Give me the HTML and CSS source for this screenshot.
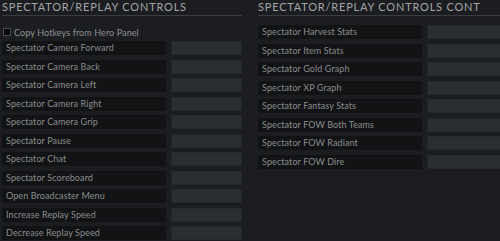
FILE: index.html
```html
<!doctype HTML>
<html>

<head>
  <title>Hotkeys</title>
  <link rel="stylesheet" href="styles.css">
</head>

<body>
  <main>
    <section>
      <h2>Spectator/Replay Controls</h2>
      <label class="copy"><span class="box"></span>Copy Hotkeys from Hero Panel</label>
      <ul class="keys">
        <li><span>Spectator Camera Forward</span><b></b></li>
        <li><span>Spectator Camera Back</span><b></b></li>
        <li><span>Spectator Camera Left</span><b></b></li>
        <li><span>Spectator Camera Right</span><b></b></li>
        <li><span>Spectator Camera Grip</span><b></b></li>
        <li><span>Spectator Pause</span><b></b></li>
        <li><span>Spectator Chat</span><b></b></li>
        <li><span>Spectator Scoreboard</span><b></b></li>
        <li><span>Open Broadcaster Menu</span><b></b></li>
        <li><span>Increase Replay Speed</span><b></b></li>
        <li><span>Decrease Replay Speed</span><b></b></li>
      </ul>
    </section>
    <section class="cont">
      <h2>Spectator/Replay Controls Cont</h2>
      <ul class="keys">
        <li><span>Spectator Harvest Stats</span><b></b></li>
        <li><span>Spectator Item Stats</span><b></b></li>
        <li><span>Spectator Gold Graph</span><b></b></li>
        <li><span>Spectator XP Graph</span><b></b></li>
        <li><span>Spectator Fantasy Stats</span><b></b></li>
        <li><span>Spectator FOW Both Teams</span><b></b></li>
        <li><span>Spectator FOW Radiant</span><b></b></li>
        <li><span>Spectator FOW Dire</span><b></b></li>
      </ul>
    </section>
  </main>
</body>

</html>
```

FILE: styles.css
```css
*,
*::before,
*::after {
  box-sizing: border-box;
}

html {
  font-family: Lato, "Open Sans", sans-serif;
  font-size: 9px;
}

body {
  margin: 0;
  background: #1c1d20;
  color: #8a8d90;
  overflow: hidden;
}

main {
  display: grid;
  grid-template-columns: 240px 244px;
  column-gap: 16px;
  padding-left: 2px;
}

h2 {
  margin: 0;
  padding-top: 1px;
  height: 16px;
  border-bottom: 1px solid #3a3d41;
  font-size: 11px;
  font-weight: normal;
  line-height: 11px;
  letter-spacing: 0.8px;
  text-transform: uppercase;
  color: #a2a5a8;
  white-space: nowrap;
}

.copy {
  display: flex;
  align-items: center;
  gap: 3px;
  height: 12px;
  margin: 10px 0 3px 1px;
  color: #8e9194;
  letter-spacing: 0.1px;
}

.copy .box {
  width: 8px;
  height: 8px;
  background: #050505;
  border: 1px solid #4a4d50;
}

.keys {
  list-style: none;
  margin: 0;
  padding: 0;
  display: flex;
  flex-direction: column;
  gap: 4.5px;
}

.cont .keys {
  margin-top: 9px;
}

.keys li {
  display: grid;
  grid-template-columns: 164px 1fr;
  column-gap: 5px;
  height: 14px;
}

.keys span {
  background: #121314;
  padding-left: 4px;
  line-height: 14px;
  letter-spacing: 0.1px;
  white-space: nowrap;
}

.keys b {
  background: #2a2e30;
  border: 1px solid #25282a;
}
```
